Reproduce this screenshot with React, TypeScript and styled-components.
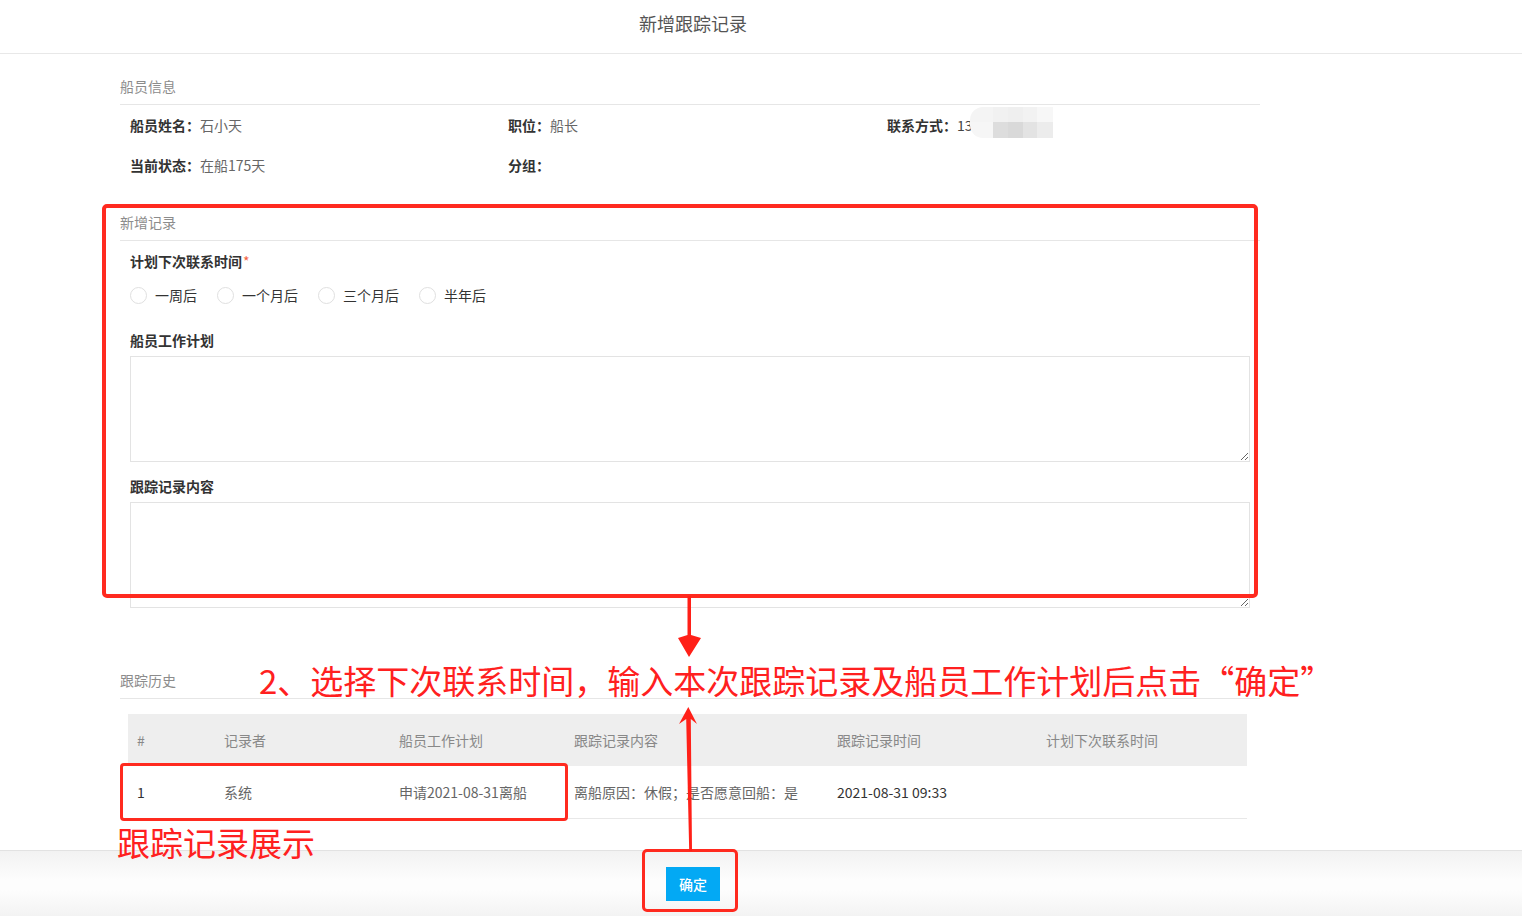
import React from 'react'
import styled, {createGlobalStyle} from 'styled-components'

const GlobalStyle = createGlobalStyle`
  html, body {
    margin: 0;
    padding: 0;
    background: #fff;
  }
  body {
    font-family: "Noto Sans CJK SC", "Noto Sans", sans-serif;
    font-size: 14px;
    color: #333;
  }
  * {
    box-sizing: border-box;
  }
`

const Page = styled.div`
  position: relative;
  display: flex;
  flex-direction: column;
  height: 100vh;
  overflow: hidden;
  background: #fff;
`

const Header = styled.header`
  flex: none;
  height: 54px;
  padding: 0 136px 8px 0;
  display: flex;
  align-items: center;
  justify-content: center;
  border-bottom: 1px solid #e8e8e8;
`

const Title = styled.h1`
  margin: 0;
  font-size: 18px;
  font-weight: 400;
  line-height: 24px;
  color: #555;
`

const Main = styled.main`
  flex: 1;
  padding: 23px 0 0 120px;
`

const Section = styled.section<{$gap?: number}>`
  width: 1140px;
  margin-top: ${p => p.$gap ?? 0}px;
`

const SectionTitle = styled.div`
  padding-bottom: 9px;
  line-height: 18px;
  font-size: 14px;
  color: #8c8c8c;
  border-bottom: 1px solid #e6e6e6;
`

const InfoGrid = styled.div`
  display: grid;
  grid-template-columns: 378px 379px 379px;
  grid-auto-rows: 40px;
  padding-left: 10px;
`

const InfoItem = styled.div`
  display: flex;
  align-items: center;
  padding-bottom: 1px;
  white-space: nowrap;
`

const Label = styled.span`
  font-weight: 700;
  color: #333;
`

const Value = styled.span<{$dark?: boolean}>`
  color: ${p => (p.$dark ? '#444' : '#666')};
`

const PhoneMask = styled.span`
  display: inline-grid;
  grid-template-columns: 23px 15px 15px 14px 16px;
  grid-template-rows: 15px 16px;
  margin: -4px 0 0 -3px;
  border-radius: 13px 0 0 13px;
  overflow: hidden;
`

const MaskCell = styled.span<{$c: string}>`
  background: ${p => p.$c};
`

const FormBody = styled.div`
  padding-left: 10px;
`

const FieldLabel = styled.div<{$mt: number}>`
  margin-top: ${p => p.$mt}px;
  line-height: 20px;
  font-weight: 700;
  color: #333;
`

const Required = styled.span`
  margin-left: 1px;
  font-weight: 400;
  color: #f2613f;
`

const RadioGroup = styled.div`
  display: flex;
  align-items: center;
  height: 20px;
  margin-top: 14px;
`

const RadioOption = styled.label`
  display: flex;
  align-items: center;
  margin-right: 20px;
  color: #333;
  cursor: pointer;
`

const RadioCircle = styled.span`
  width: 17px;
  height: 17px;
  margin-right: 8px;
  border: 1px solid #e0e0e0;
  border-radius: 50%;
  background: #fff;
`

const TextArea = styled.textarea`
  display: block;
  width: 1120px;
  height: 106px;
  margin-top: 6px;
  padding: 6px 8px;
  border: 1px solid #e3e3e3;
  border-radius: 0;
  font: inherit;
  color: #333;
  resize: vertical;
  outline: none;
`

const HistoryTable = styled.div`
  width: 1119px;
  margin: 15px 0 0 8px;
`

const TableRow = styled.div<{$head?: boolean}>`
  display: grid;
  grid-template-columns: 87px 175px 175px 263px 209px 210px;
  align-items: center;
  height: ${p => (p.$head ? 52 : 53)}px;
  padding-bottom: 1px;
  background: ${p => (p.$head ? '#eeeeee' : '#fff')};
  border-bottom: ${p => (p.$head ? 'none' : '1px solid #e8e8e8')};
  color: ${p => (p.$head ? '#888' : '#666')};
`

const Cell = styled.div<{$dark?: boolean}>`
  padding-left: 9px;
  white-space: nowrap;
  color: ${p => (p.$dark ? '#333' : 'inherit')};
`

const Footer = styled.footer`
  flex: none;
  height: 66px;
  padding-right: 136px;
  display: flex;
  align-items: center;
  justify-content: center;
  border-top: 1px solid #e2e2e2;
  background: linear-gradient(to bottom, #f2f2f2 0%, #fdfdfd 45%, #fdfdfd 60%, #f3f3f3 100%);
`

const ConfirmButton = styled.button`
  width: 54px;
  height: 34px;
  padding: 0;
  border: none;
  border-radius: 0;
  background: #03a9f4;
  color: #fff;
  font: inherit;
  font-size: 14px;
  font-weight: 500;
  cursor: pointer;
`

/* annotation layer drawn over the screen */
const FormHighlight = styled.div`
  position: absolute;
  left: 102px;
  top: 204px;
  width: 1156px;
  height: 394px;
  border: 4px solid #ff2a1f;
  border-radius: 5px;
  pointer-events: none;
`

const RowHighlight = styled.div`
  position: absolute;
  left: 120px;
  top: 763px;
  width: 448px;
  height: 58px;
  border: 3px solid #ff2a1f;
  border-radius: 4px;
  pointer-events: none;
`

const ButtonHighlight = styled.div`
  position: absolute;
  left: 642px;
  top: 849px;
  width: 96px;
  height: 63px;
  border: 3px solid #ff2a1f;
  border-radius: 5px;
  pointer-events: none;
`

const StepNote = styled.div`
  position: absolute;
  left: 259px;
  top: 660px;
  font-size: 33px;
  line-height: 40px;
  color: #ff2020;
  white-space: nowrap;
  pointer-events: none;
`

const RowNote = styled.div`
  position: absolute;
  left: 117px;
  top: 822px;
  font-size: 33px;
  line-height: 40px;
  color: #ff2020;
  white-space: nowrap;
  pointer-events: none;
`

const ArrowLayer = styled.svg`
  position: absolute;
  left: 670px;
  top: 590px;
  pointer-events: none;
`

const radioOptions = ['一周后', '一个月后', '三个月后', '半年后']

const maskColors = [
  '#f4f4f4', '#f1f1f1', '#efefef', '#f2f2f2', '#f7f7f7',
  '#f6f6f6', '#dddddd', '#d9d9d9', '#e3e3e3', '#ececec',
]

const historyColumns = ['#', '记录者', '船员工作计划', '跟踪记录内容', '跟踪记录时间', '计划下次联系时间']

export default function App() {
  return (
    <Page>
      <GlobalStyle />
      <Header>
        <Title>新增跟踪记录</Title>
      </Header>

      <Main>
        <Section>
          <SectionTitle>船员信息</SectionTitle>
          <InfoGrid>
            <InfoItem>
              <Label>船员姓名：</Label>
              <Value>石小天</Value>
            </InfoItem>
            <InfoItem>
              <Label>职位：</Label>
              <Value>船长</Value>
            </InfoItem>
            <InfoItem>
              <Label>联系方式：</Label>
              <Value $dark>13</Value>
              <PhoneMask>
                {maskColors.map((c, i) => (
                  <MaskCell key={i} $c={c} />
                ))}
              </PhoneMask>
            </InfoItem>
            <InfoItem>
              <Label>当前状态：</Label>
              <Value>在船175天</Value>
            </InfoItem>
            <InfoItem>
              <Label>分组：</Label>
            </InfoItem>
          </InfoGrid>
        </Section>

        <Section $gap={28}>
          <SectionTitle>新增记录</SectionTitle>
          <FormBody>
            <FieldLabel $mt={10}>
              计划下次联系时间<Required>*</Required>
            </FieldLabel>
            <RadioGroup>
              {radioOptions.map(opt => (
                <RadioOption key={opt}>
                  <RadioCircle />
                  {opt}
                </RadioOption>
              ))}
            </RadioGroup>
            <FieldLabel $mt={25}>船员工作计划</FieldLabel>
            <TextArea />
            <FieldLabel $mt={14}>跟踪记录内容</FieldLabel>
            <TextArea />
          </FormBody>
        </Section>

        <Section $gap={63}>
          <SectionTitle>跟踪历史</SectionTitle>
          <HistoryTable>
            <TableRow $head>
              {historyColumns.map(col => (
                <Cell key={col}>{col}</Cell>
              ))}
            </TableRow>
            <TableRow>
              <Cell $dark>1</Cell>
              <Cell>系统</Cell>
              <Cell>申请2021-08-31离船</Cell>
              <Cell>离船原因：休假；是否愿意回船：是</Cell>
              <Cell $dark>2021-08-31 09:33</Cell>
              <Cell></Cell>
            </TableRow>
          </HistoryTable>
        </Section>
      </Main>

      <Footer>
        <ConfirmButton>确定</ConfirmButton>
      </Footer>

      <FormHighlight />
      <RowHighlight />
      <ButtonHighlight />
      <StepNote>2、选择下次联系时间，输入本次跟踪记录及船员工作计划后点击“确定”</StepNote>
      <RowNote>跟踪记录展示</RowNote>
      <ArrowLayer width="40" height="270" viewBox="670 590 40 270">
        <path d="M687.5 596 L691 596 L691 635 L701 638 L689 657 L678 638 L687.5 635 Z" fill="#ff2018" />
        <path d="M688.3 707 L697 724 L690.8 719 L692 851 L689.2 851 L686.2 719 L679 724 Z" fill="#ff2018" />
      </ArrowLayer>
    </Page>
  )
}
